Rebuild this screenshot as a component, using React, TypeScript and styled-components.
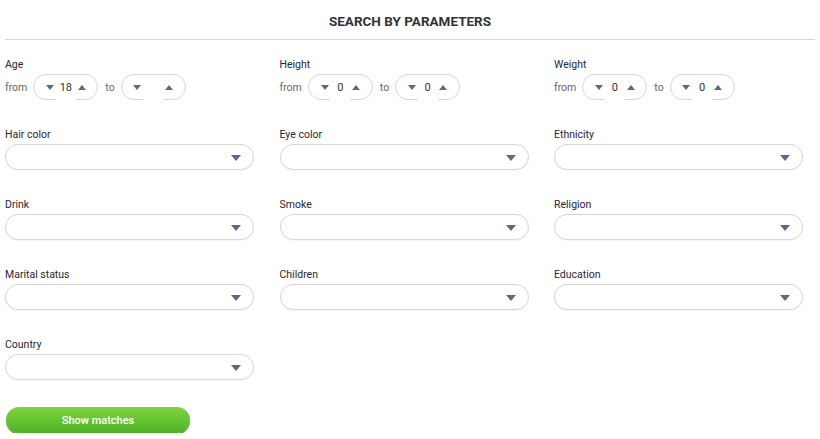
import React from 'react';
import styled, { createGlobalStyle } from 'styled-components';

const GlobalStyle = createGlobalStyle`
  body {
    margin: 0;
    background: #ffffff;
    font-family: Roboto, "Liberation Sans", Arial, sans-serif;
  }
`;

const Page = styled.div`
  padding: 0 5px;
  width: 810px;
`;

const Title = styled.h2`
  margin: 0;
  padding: 13px 0 10px;
  font-size: 13.5px;
  line-height: 16px;
  font-weight: 700;
  text-align: center;
  text-transform: uppercase;
  color: #333333;
  border-bottom: 1px solid #d4d4d4;
`;

const Grid = styled.div`
  display: grid;
  grid-template-columns: repeat(3, 249px);
  column-gap: 25.5px;
  row-gap: 28px;
  margin-top: 18px;
`;

const Field = styled.div`
  display: flex;
  flex-direction: column;
`;

const Label = styled.div`
  font-size: 10.5px;
  line-height: 14px;
  color: #2b2530;
  margin-bottom: 2px;
`;

const RangeRow = styled.div`
  display: flex;
  align-items: center;
  height: 26px;
`;

const RangeWord = styled.span`
  font-size: 10.5px;
  color: #666666;
  margin-right: 6px;
  &:not(:first-child) {
    margin-left: 7px;
  }
`;

const Spinner = styled.div`
  display: flex;
  align-items: center;
  box-sizing: border-box;
  width: 65px;
  height: 26px;
  padding: 0 10px;
  border: 1px solid #d6d6d6;
  border-radius: 13px;
`;

const Arrow = styled.span<{ $up?: boolean }>`
  width: 12px;
  display: flex;
  justify-content: center;
  &::before {
    content: '';
    width: 0;
    height: 0;
    border-left: 4.5px solid transparent;
    border-right: 4.5px solid transparent;
    ${({ $up }) => ($up ? 'border-bottom: 5px solid #5d6884;' : 'border-top: 5px solid #5d6884;')}
  }
`;

const Number = styled.span`
  align-self: stretch;
  width: 21px;
  margin-bottom: -1px;
  background: #ffffff;
  display: flex;
  align-items: center;
  justify-content: center;
  font-size: 11px;
  color: #333333;
`;

const Select = styled.div`
  position: relative;
  box-sizing: border-box;
  height: 26px;
  border: 1px solid #d6d6d6;
  border-radius: 13px;
  background: #ffffff;
  box-shadow: 0 1px 1px rgba(0, 0, 0, 0.04);
  &::after {
    content: '';
    position: absolute;
    right: 12px;
    top: 10px;
    border-left: 5px solid transparent;
    border-right: 5px solid transparent;
    border-top: 6px solid #5d6884;
  }
`;

const Button = styled.button`
  margin: 27px 0 0 1px;
  width: 184px;
  height: 26px;
  border: none;
  border-radius: 13px;
  background: linear-gradient(to bottom, #82d33e 0%, #62c030 60%, #4fb027 100%);
  box-shadow: 0 1px 0 #3f8f20, 0 1px 2px rgba(0, 0, 0, 0.15);
  color: #ffffff;
  font-family: Roboto, "Liberation Sans", Arial, sans-serif;
  font-size: 11px;
  font-weight: 500;
  cursor: pointer;
`;

const RangeSpinner: React.FC<{ value?: string }> = ({ value }) => (
  <Spinner>
    <Arrow />
    <Number>{value}</Number>
    <Arrow $up />
  </Spinner>
);

const ranges = [
  { label: 'Age', from: '18', to: '' },
  { label: 'Height', from: '0', to: '0' },
  { label: 'Weight', from: '0', to: '0' },
];

const selects = [
  'Hair color',
  'Eye color',
  'Ethnicity',
  'Drink',
  'Smoke',
  'Religion',
  'Marital status',
  'Children',
  'Education',
  'Country',
];

export default function App() {
  return (
    <Page>
      <GlobalStyle />
      <Title>Search by parameters</Title>
      <Grid>
        {ranges.map((r) => (
          <Field key={r.label}>
            <Label>{r.label}</Label>
            <RangeRow>
              <RangeWord>from</RangeWord>
              <RangeSpinner value={r.from} />
              <RangeWord>to</RangeWord>
              <RangeSpinner value={r.to} />
            </RangeRow>
          </Field>
        ))}
        {selects.map((name) => (
          <Field key={name}>
            <Label>{name}</Label>
            <Select />
          </Field>
        ))}
      </Grid>
      <Button>Show matches</Button>
    </Page>
  );
}
